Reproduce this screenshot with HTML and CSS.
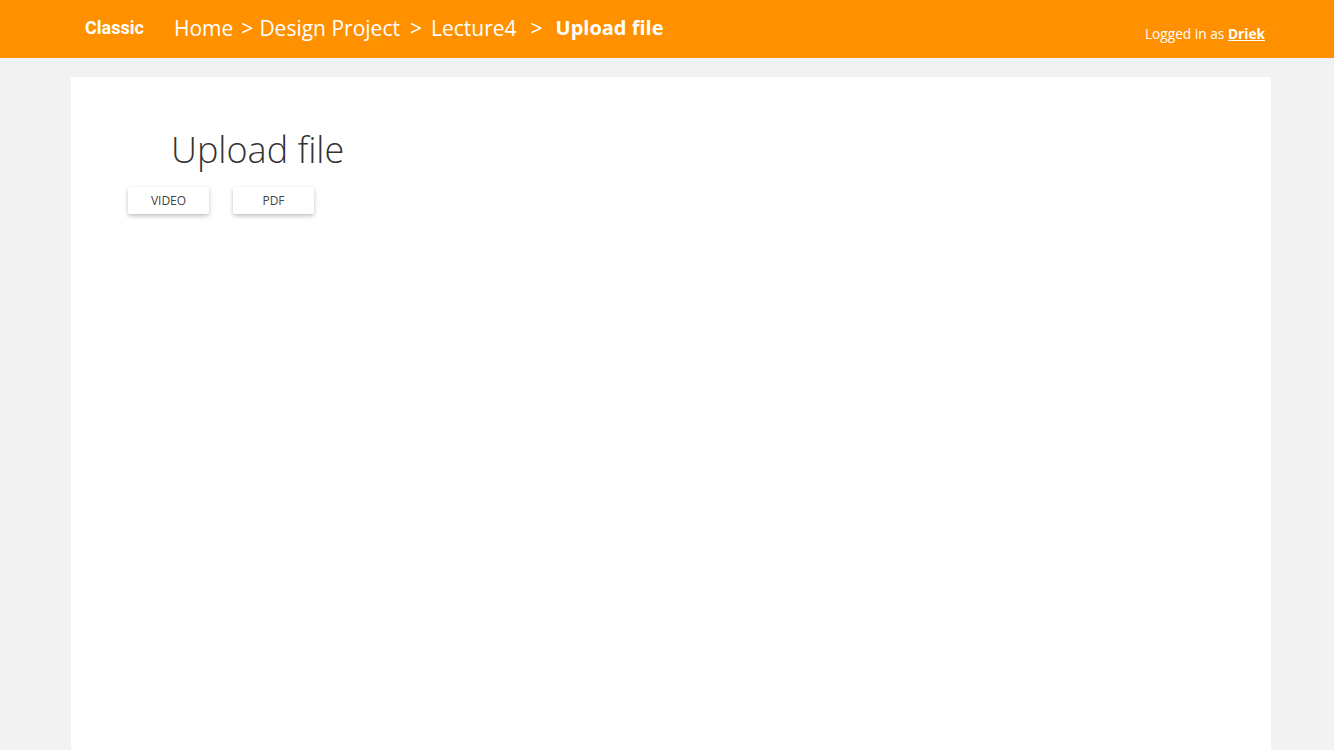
FILE: index.html
```html
<!DOCTYPE html>
<html>
<head>
<meta charset="utf-8">
<link rel="stylesheet" href="styles.css">
</head>
<body>
<header class="topbar">
  <div class="brand">Classic</div>
  <nav class="crumbs">
    <span class="crumb">Home</span>
    <span class="sep">&gt;</span>
    <span class="crumb">Design Project</span>
    <span class="sep mid">&gt;</span>
    <span class="crumb">Lecture4</span>
    <span class="sep wide">&gt;</span>
    <span class="crumb current">Upload file</span>
  </nav>
  <div class="user">Logged in as <a class="user-name" href="#">Driek</a></div>
</header>
<main class="page">
  <section class="panel">
    <h1 class="title">Upload file</h1>
    <div class="actions">
      <button class="btn">VIDEO</button>
      <button class="btn">PDF</button>
    </div>
  </section>
</main>
</body>
</html>
```
FILE: styles.css
```css
* { box-sizing: border-box; }
html, body { margin: 0; padding: 0; }
body {
  background: #f2f2f2;
  font-family: "Open Sans", "Noto Sans", sans-serif;
  height: 750px;
  overflow: hidden;
}
.topbar {
  height: 58px;
  background: #ff9100;
  display: flex;
  align-items: center;
  padding: 0 69px 0 85px;
  color: #fff;
}
.brand {
  font-family: Roboto, "Liberation Sans", sans-serif;
  font-weight: 700;
  font-size: 18px;
  width: 89px;
  margin-top: -3px;
}
.crumbs {
  display: flex;
  align-items: center;
  font-size: 21px;
  margin-top: -3px;
  flex: 1;
}
.sep { margin: 0 6px 0 8px; }
.sep.mid { margin: 0 9px 0 10px; }
.sep.wide { margin: 0 13px 0 14px; }
.current { font-weight: 700; font-size: 20px; }
.user {
  font-size: 13.7px;
  margin-top: 8px;
}
.user-name {
  color: #fff;
  font-weight: 700;
  text-decoration: underline;
}
.page {
  padding: 19px 63px 0 71px;
  height: 692px;
}
.panel {
  background: #fff;
  width: 1200px;
  height: 673px;
  padding: 47px 0 0 57px;
}
.title {
  margin: 0 0 11px 43px;
  font-weight: 300;
  font-size: 36px;
  line-height: 52px;
  color: #333;
}
.actions {
  display: flex;
  gap: 24px;
}
.btn {
  width: 81px;
  height: 27px;
  border: none;
  background: #fff;
  border-radius: 2px;
  box-shadow: 0 2px 4px rgba(0,0,0,0.25);
  font-family: "Open Sans", sans-serif;
  font-weight: 400;
  font-size: 12px;
  color: #444;
  padding: 0;
}
```
